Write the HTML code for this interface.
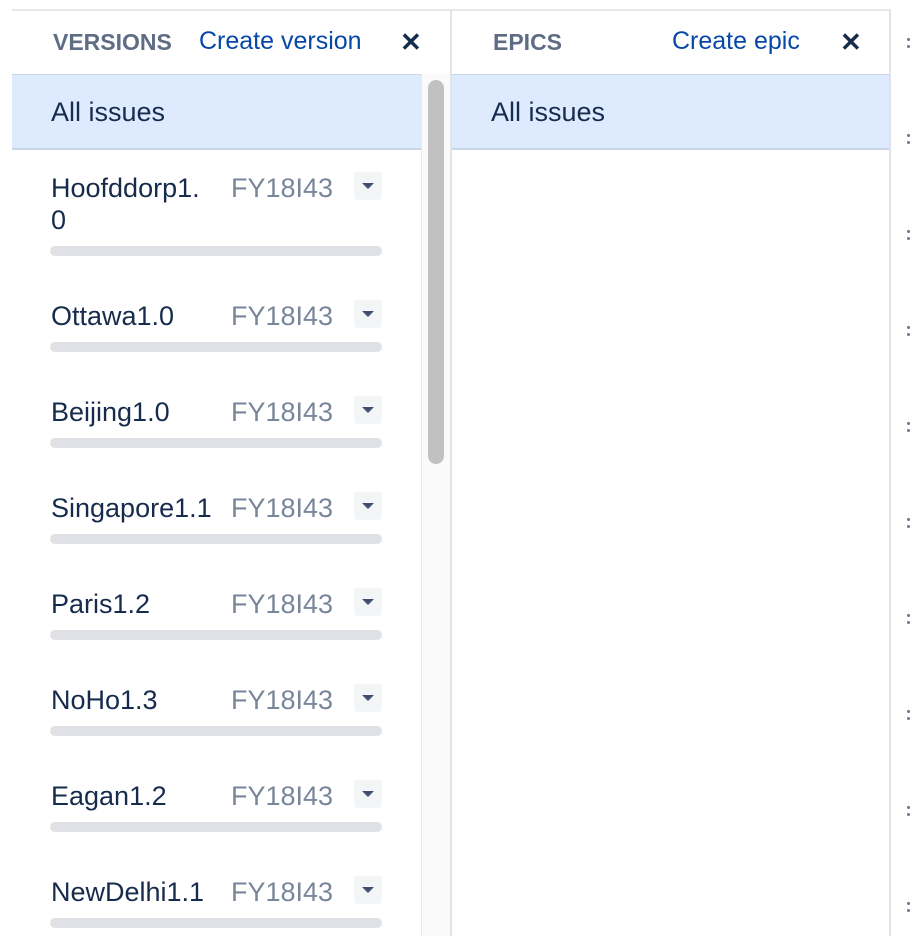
<!DOCTYPE html>
<html><head><meta charset="utf-8"><style>
*{margin:0;padding:0;box-sizing:border-box}
body{width:910px;height:936px;background:#fff;position:relative;overflow:hidden;font-family:"Liberation Sans",sans-serif;}
.a{position:absolute;white-space:nowrap}
.hd{font-weight:bold;font-size:23px;color:#5e6c84;}
.lk{font-size:25px;color:#0747a6;}
.x{font-size:26px;font-weight:bold;color:#172b4d;}
.nm{font-size:27px;color:#172b4d;line-height:32px;}
.fy{font-size:27px;color:#7a869a;line-height:32px;}
.bar{position:absolute;left:50px;width:332px;height:10px;border-radius:5px;background:#dfe1e6;}
.dd{position:absolute;left:354px;width:28px;height:28px;border-radius:4px;background:#f4f5f7;}
.dd:after{content:"";position:absolute;left:8px;top:11px;border-left:6px solid transparent;border-right:6px solid transparent;border-top:6px solid #42526e;}
.dot{position:absolute;left:907px;width:3px;height:3px;border-radius:2px;background:#6b778c;}
</style></head><body>
<div class="a" style="left:12px;top:9px;width:879px;height:2px;background:#e6e8eb"></div>
<div class="a" style="left:450px;top:10px;width:2px;height:926px;background:#e1e3e6"></div>
<div class="a" style="left:889px;top:10px;width:2px;height:926px;background:#e1e3e6"></div>
<div class="a hd" style="left:53px;top:29px">VERSIONS</div>
<div class="a lk" style="left:199px;top:27px">Create version</div>
<div class="a x" style="left:400px;top:27px">✕</div>
<div class="a hd" style="left:493px;top:29px">EPICS</div>
<div class="a lk" style="left:672px;top:27px">Create epic</div>
<div class="a x" style="left:840px;top:27px">✕</div>
<div class="a" style="left:12px;top:74px;width:409px;height:76px;background:#deebff;border-top:1px solid #c9d6e8;border-bottom:2px solid #c9d6e8"></div>
<div class="a" style="left:452px;top:74px;width:437px;height:76px;background:#deebff;border-top:1px solid #c9d6e8;border-bottom:2px solid #c9d6e8"></div>
<div class="a nm" style="left:51px;top:96px">All issues</div>
<div class="a nm" style="left:491px;top:96px">All issues</div>
<div class="a" style="left:421px;top:74px;width:29px;height:862px;background:#fafafa;border-left:1px solid #e8e8e8"></div>
<div class="a" style="left:428px;top:80px;width:16px;height:384px;border-radius:8px;background:#c1c1c1"></div>
<div class="a nm" style="left:51px;top:172px">Hoofddorp1.</div>
<div class="a nm" style="left:51px;top:204px">0</div>
<div class="a fy" style="left:231px;top:172px">FY18I43</div>
<div class="dd" style="top:172px"></div>
<div class="bar" style="top:246px"></div>
<div class="a nm" style="left:51px;top:300px">Ottawa1.0</div><div class="a fy" style="left:231px;top:300px">FY18I43</div><div class="dd" style="top:300px"></div><div class="bar" style="top:342px"></div>
<div class="a nm" style="left:51px;top:396px">Beijing1.0</div><div class="a fy" style="left:231px;top:396px">FY18I43</div><div class="dd" style="top:396px"></div><div class="bar" style="top:438px"></div>
<div class="a nm" style="left:51px;top:492px">Singapore1.1</div><div class="a fy" style="left:231px;top:492px">FY18I43</div><div class="dd" style="top:492px"></div><div class="bar" style="top:534px"></div>
<div class="a nm" style="left:51px;top:588px">Paris1.2</div><div class="a fy" style="left:231px;top:588px">FY18I43</div><div class="dd" style="top:588px"></div><div class="bar" style="top:630px"></div>
<div class="a nm" style="left:51px;top:684px">NoHo1.3</div><div class="a fy" style="left:231px;top:684px">FY18I43</div><div class="dd" style="top:684px"></div><div class="bar" style="top:726px"></div>
<div class="a nm" style="left:51px;top:780px">Eagan1.2</div><div class="a fy" style="left:231px;top:780px">FY18I43</div><div class="dd" style="top:780px"></div><div class="bar" style="top:822px"></div>
<div class="a nm" style="left:51px;top:876px">NewDelhi1.1</div><div class="a fy" style="left:231px;top:876px">FY18I43</div><div class="dd" style="top:876px"></div><div class="bar" style="top:918px"></div>
<div class="dot" style="top:38px"></div><div class="dot" style="top:45px"></div>
<div class="dot" style="top:134px"></div><div class="dot" style="top:141px"></div>
<div class="dot" style="top:230px"></div><div class="dot" style="top:237px"></div>
<div class="dot" style="top:326px"></div><div class="dot" style="top:333px"></div>
<div class="dot" style="top:422px"></div><div class="dot" style="top:429px"></div>
<div class="dot" style="top:518px"></div><div class="dot" style="top:525px"></div>
<div class="dot" style="top:614px"></div><div class="dot" style="top:621px"></div>
<div class="dot" style="top:710px"></div><div class="dot" style="top:717px"></div>
<div class="dot" style="top:806px"></div><div class="dot" style="top:813px"></div>
<div class="dot" style="top:902px"></div><div class="dot" style="top:909px"></div>
</body></html>
